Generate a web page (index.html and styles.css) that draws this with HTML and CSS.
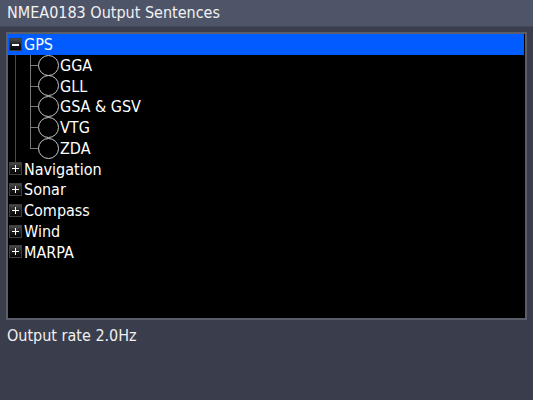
FILE: index.html
```html
<!DOCTYPE html>
<html>
<head>
<meta charset="utf-8">
<link rel="stylesheet" href="styles.css">
</head>
<body>
<div class="screen">
  <div class="title">NMEA0183 Output Sentences</div>
  <div class="panel">
    <div class="tree">
      <div class="node open">
        <div class="row selected"><span class="exp minus"></span><span class="label">GPS</span></div>
        <div class="children">
          <div class="row child"><span class="radio"></span><span class="label">GGA</span></div>
          <div class="row child"><span class="radio"></span><span class="label">GLL</span></div>
          <div class="row child"><span class="radio"></span><span class="label">GSA &amp; GSV</span></div>
          <div class="row child"><span class="radio"></span><span class="label">VTG</span></div>
          <div class="row child last"><span class="radio"></span><span class="label">ZDA</span></div>
        </div>
      </div>
      <div class="row"><span class="exp plus"></span><span class="label">Navigation</span></div>
      <div class="row"><span class="exp plus"></span><span class="label">Sonar</span></div>
      <div class="row"><span class="exp plus"></span><span class="label">Compass</span></div>
      <div class="row"><span class="exp plus"></span><span class="label">Wind</span></div>
      <div class="row"><span class="exp plus"></span><span class="label">MARPA</span></div>
    </div>
  </div>
  <div class="footer">Output rate 2.0Hz</div>
</div>
</body>
</html>
```

FILE: styles.css
```css
html, body {
  margin: 0;
  padding: 0;
}
body {
  background: #3a3d4b;
  font-family: "DejaVu Sans Condensed", "DejaVu Sans", sans-serif;
  color: #ffffff;
}
.screen {
  width: 533px;
  height: 400px;
  display: flex;
  flex-direction: column;
  background: #3a3d4b;
}
.title {
  height: 26px;
  line-height: 26px;
  padding-left: 7px;
  font-size: 16px;
  color: #f2f2f2;
  background: #4e5569;
  border-bottom: 1px solid #42465a;
}
.panel {
  margin: 5px 6px 0 6px;
  height: 288px;
  box-sizing: border-box;
  border: 2px solid #5a5e6b;
  background: #000000;
}
.tree {
  display: flex;
  flex-direction: column;
}
.row {
  position: relative;
  height: 20.75px;
  line-height: 20.75px;
  font-size: 16px;
  display: flex;
  align-items: center;
  white-space: pre;
}
.row.selected {
  background: #005cff;
  margin-right: 1px;
}
.label {
  line-height: 20.75px;
  padding-top: 2px;
}
.exp {
  position: relative;
  width: 13px;
  height: 13px;
  margin-left: 1px;
  margin-right: 2px;
  box-sizing: border-box;
  border: 1px solid #3e3e3e;
  background: linear-gradient(#4a4a4a, #1a1a1a 55%, #050505);
  flex: none;
}
.exp::before {
  content: "";
  position: absolute;
  left: 2px;
  top: 5px;
  width: 7px;
  height: 1px;
  background: #ffffff;
}
.exp.minus::before {
  height: 2px;
}
.exp.plus::after {
  content: "";
  position: absolute;
  left: 5px;
  top: 2px;
  width: 1px;
  height: 7px;
  background: #ffffff;
}
.children {
  position: relative;
}
.children::before {
  content: "";
  position: absolute;
  left: 7px;
  top: 0;
  bottom: -4px;
  width: 1px;
  background: #484848;
}
.children::after {
  content: "";
  position: absolute;
  left: 22px;
  top: 0;
  bottom: 10px;
  width: 1px;
  background: #7a7a7a;
}
.row.child {
  padding-left: 30px;
}
.row.child::before {
  content: "";
  position: absolute;
  left: 22px;
  top: 10px;
  width: 8px;
  height: 1px;
  background: #7a7a7a;
}
.radio {
  width: 21px;
  height: 21px;
  box-sizing: border-box;
  border: 1.5px solid #c8c8c8;
  border-radius: 50%;
  margin-right: 1px;
  flex: none;
}
.footer {
  margin-top: 5px;
  padding-left: 7px;
  line-height: 22px;
  font-size: 16px;
  color: #f0f0f0;
}
```
